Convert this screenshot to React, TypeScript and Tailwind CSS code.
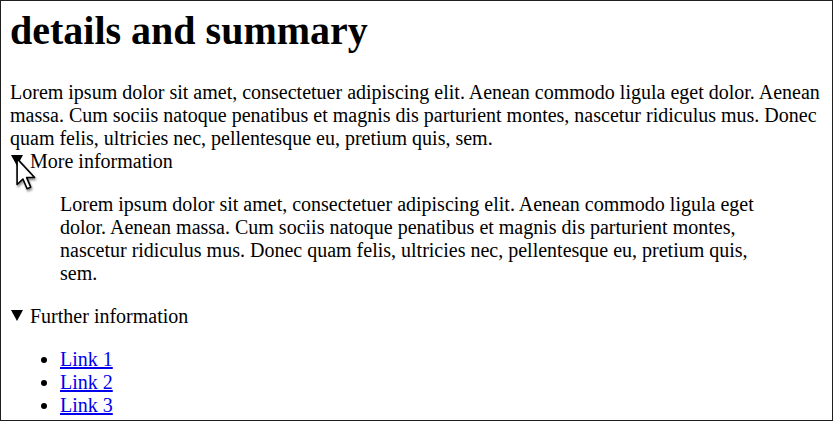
import React from "react";

const lorem =
  "Lorem ipsum dolor sit amet, consectetuer adipiscing elit. Aenean commodo ligula eget dolor. Aenean massa. Cum sociis natoque penatibus et magnis dis parturient montes, nascetur ridiculus mus. Donec quam felis, ultricies nec, pellentesque eu, pretium quis, sem.";

const Cursor = () => (
  <svg
    className="absolute left-[14px] top-[156px] drop-shadow-[1px_2px_1px_rgba(0,0,0,0.45)]"
    width="22"
    height="34"
    viewBox="0 0 13 21"
  >
    <path
      d="M1 1 L1 17 L4.6 13.6 L7.2 19.6 L9.4 18.6 L6.9 12.7 L11.8 12.7 Z"
      fill="#fff"
      stroke="#000"
      strokeWidth="1"
      strokeLinejoin="round"
    />
  </svg>
);

const Summary = ({ children }: { children: React.ReactNode }) => (
  <summary className="list-none cursor-default [&::-webkit-details-marker]:hidden">
    <svg
      className="inline-block align-[2px] mr-[7px] ml-[1px]"
      width="12"
      height="11"
      viewBox="0 0 12 11"
    >
      <path d="M0 0 L12 0 L6 11 Z" fill="#000" />
    </svg>
    {children}
  </summary>
);

export default function App() {
  return (
    <div className="relative w-[833px] h-[421px] overflow-hidden border border-[#1f1f1f] bg-white text-black font-['Liberation_Serif',serif] text-[20px] leading-[23px]">
      <div className="px-[9px] pt-[7px]">
        <h1 className="text-[40px] leading-[46px] font-bold mb-[27px]">details and summary</h1>
        <p>{lorem}</p>
        <details open>
          <Summary>More information</Summary>
          <blockquote className="my-[20px] mx-[50px]">{lorem}</blockquote>
        </details>
        <details open>
          <Summary>Further information</Summary>
          <ul className="list-disc pl-[50px] my-[20px]">
            <li>
              <a href="#" className="text-[#0000ee] underline">Link 1</a>
            </li>
            <li>
              <a href="#" className="text-[#0000ee] underline">Link 2</a>
            </li>
            <li>
              <a href="#" className="text-[#0000ee] underline">Link 3</a>
            </li>
          </ul>
        </details>
      </div>
      <Cursor />
    </div>
  );
}
